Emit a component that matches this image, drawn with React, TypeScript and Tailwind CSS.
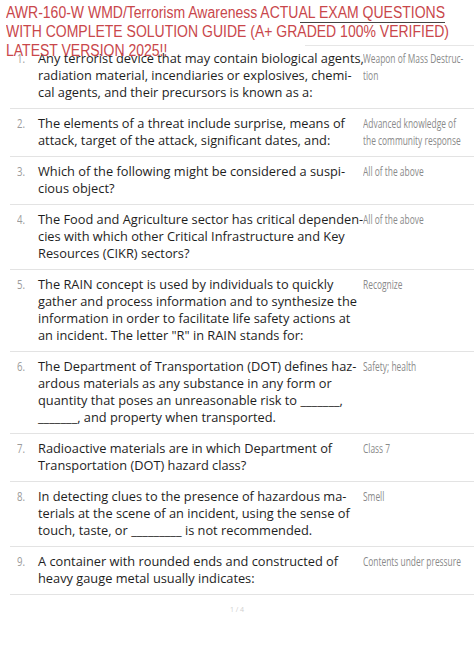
import React from 'react';

interface Item {
  q: string[];
  a: string[];
}

const items: Item[] = [
  {
    q: [
      'Any terrorist device that may contain biological agents,',
      'radiation material, incendiaries or explosives, chemi-',
      'cal agents, and their precursors is known as a:',
    ],
    a: ['Weapon of Mass Destruc-', 'tion'],
  },
  {
    q: ['The elements of a threat include surprise, means of', 'attack, target of the attack, significant dates, and:'],
    a: ['Advanced knowledge of', 'the community response'],
  },
  {
    q: ['Which of the following might be considered a suspi-', 'cious object?'],
    a: ['All of the above'],
  },
  {
    q: [
      'The Food and Agriculture sector has critical dependen-',
      'cies with which other Critical Infrastructure and Key',
      'Resources (CIKR) sectors?',
    ],
    a: ['All of the above'],
  },
  {
    q: [
      'The RAIN concept is used by individuals to quickly',
      'gather and process information and to synthesize the',
      'information in order to facilitate life safety actions at',
      'an incident. The letter "R" in RAIN stands for:',
    ],
    a: ['Recognize'],
  },
  {
    q: [
      'The Department of Transportation (DOT) defines haz-',
      'ardous materials as any substance in any form or',
      'quantity that poses an unreasonable risk to _______,',
      '_______, and property when transported.',
    ],
    a: ['Safety; health'],
  },
  {
    q: ['Radioactive materials are in which Department of', 'Transportation (DOT) hazard class?'],
    a: ['Class 7'],
  },
  {
    q: [
      'In detecting clues to the presence of hazardous ma-',
      'terials at the scene of an incident, using the sense of',
      'touch, taste, or _________ is not recommended.',
    ],
    a: ['Smell'],
  },
  {
    q: ['A container with rounded ends and constructed of', 'heavy gauge metal usually indicates:'],
    a: ['Contents under pressure'],
  },
];

const title = [
  'AWR-160-W WMD/Terrorism Awareness ACTUAL EXAM QUESTIONS',
  'WITH COMPLETE SOLUTION GUIDE (A+ GRADED 100% VERIFIED)',
  'LATEST VERSION 2025!!',
];

export default function App() {
  return (
    <div className="w-[474px] h-[671px] overflow-hidden bg-white">
      {/* red title laid over the page */}
      <div className="relative z-10 pt-[3px] pl-[6px] text-[16px] leading-[19px] text-[#c9474b] font-['Liberation_Sans',Arial,sans-serif] whitespace-nowrap">
        {title.map((line, i) => (
          <div key={i} className="scale-x-[0.875] origin-left">
            {line}
          </div>
        ))}
        <span className="absolute left-[300px] top-[22px] w-[145px] h-px bg-[#444]" />
        <span className="absolute left-[305px] top-[45px] w-[169px] h-px bg-[#e6e6e6]" />
      </div>

      <div className="-mt-[16px] pl-[10px]">
        {items.map((item, i) => (
          <div key={i} className="flex pt-[6px] pb-[7px] border-b border-[#e3e3e3] leading-[17px]">
            <div className="w-[28px] shrink-0 pl-[7px] text-[12px] text-[#9b9b9b] font-['Open_Sans',sans-serif]">
              <span className="inline-block scale-x-[0.8] origin-left">{i + 1}.</span>
            </div>
            <div className="w-[325px] shrink-0 text-[12.8px] text-[#1e1e1e] font-['Open_Sans','Noto_Sans',sans-serif] whitespace-nowrap">
              {item.q.map((line, j) => (
                <div key={j}>{line}</div>
              ))}
            </div>
            <div className="flex-1 min-w-0 text-[12px] text-[#8a8a8a] font-['Open_Sans',sans-serif] whitespace-nowrap">
              {item.a.map((line, j) => (
                <div key={j} className="scale-x-[0.7] origin-left">
                  {line}
                </div>
              ))}
            </div>
          </div>
        ))}
      </div>

      <div className="pt-[10px] text-center text-[7px] text-[#cfcfcf] font-['Open_Sans',sans-serif]">1 / 4</div>
    </div>
  );
}
